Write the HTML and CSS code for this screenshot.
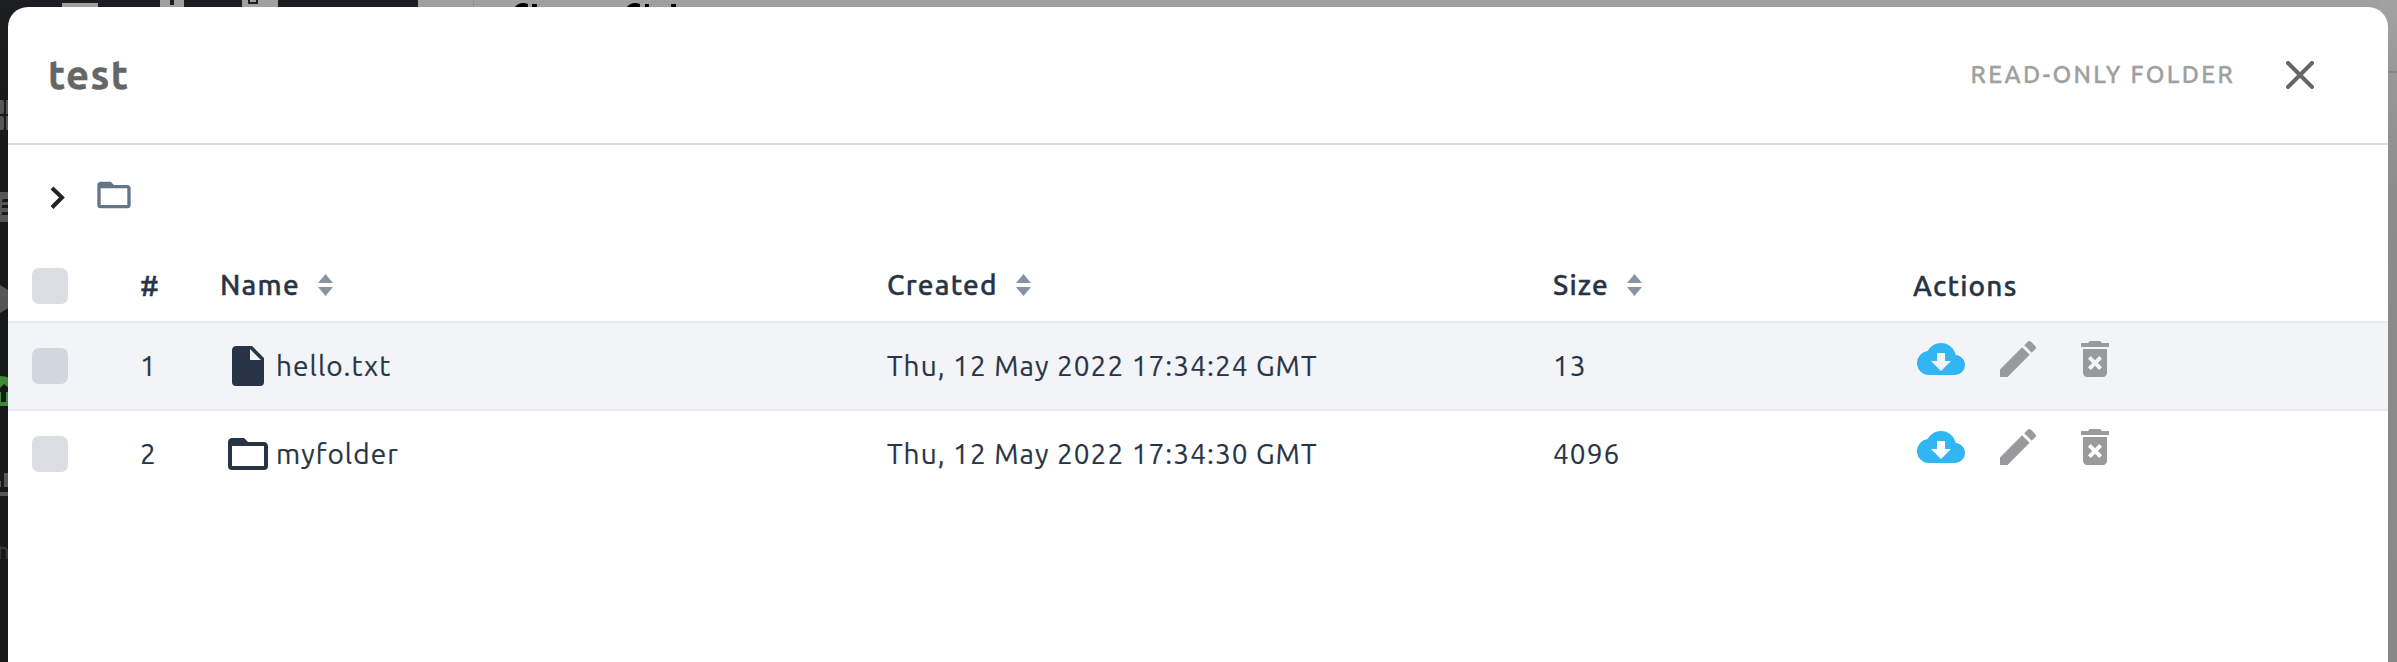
FILE: index.html
```
<!DOCTYPE html>
<html lang="en">
<head>
<meta charset="utf-8">
<title>test</title>
<link rel="stylesheet" href="styles.css">
</head>
<body>
<svg class="backdrop" width="2397" height="662" viewBox="0 0 2397 662">
  <defs>
    <linearGradient id="edge" x1="0" y1="0" x2="0" y2="1"><stop offset="0" stop-color="#a2a2a2"/><stop offset=".11" stop-color="#989898"/><stop offset=".3" stop-color="#8c8c8c"/><stop offset="1" stop-color="#888"/></linearGradient>
    <linearGradient id="side" x1="0" y1="0" x2="0" y2="1"><stop offset="0" stop-color="#1c1e20"/><stop offset=".2" stop-color="#18191b"/><stop offset="1" stop-color="#18191a"/></linearGradient>
  </defs>
  <rect width="2397" height="662" fill="#a0a0a0"/>
  <rect x="2380" width="17" height="662" fill="url(#edge)"/>
  <path d="M2388 71h9v2h-9z" fill="#868686"/>
  <path d="M473 0h1v7h-1z" fill="#949494"/>
  <rect width="418" height="662" fill="url(#side)"/>
  <path d="M62 3h36v5H62zM160 0h24v8h-24zM242 0h36v8h-36z" fill="#a0a0a0"/>
  <path d="M170 0h4v5h-4zM248 0h10v4h-10z" fill="#1c1e20"/>
  <path d="M250 0h6v2h-6z" fill="#a0a0a0"/>
  <path d="M514 8q4-5 9-5 3 0 5 1v4zM532 4h5v4h-5zM626 8q4-5 9-5 3 0 5 1v4zM645 4h4v4h-4zM671 4h5v4h-5z" fill="#000"/>
  <path d="M0 100h2q2 0 2 2v10q0 2-2 2H0zM6 100h4v14H6zM0 116h2q2 0 2 2v10q0 2-2 2H0zM6 116h4v14H6zM0 192h9v30H0zM0 285l10 6v16l-10 6z" fill="#555657"/>
  <path d="M3 199h6v3H2zM2 205h7v3H2zM2 212h7v3H2z" fill="#18191b"/>
  <path d="M0 376q6 0 9 2v28H0z" fill="#3f8a32"/>
  <path d="M0 388l4-4 5 4v4H6v10H1v-10H0z" fill="#18191b"/>
  <path d="M0 481h1v6H0zM4 473h5v14H4zM0 492h9v4H0z" fill="#555657"/>
  <path d="M0 546h1v13H0zM1 547h4q3 1 3 4v8H6v-7q0-3-3-3H1z" fill="#353638"/>
</svg>
<main class="modal">
  <header class="modal-header">
    <h1 class="title">test</h1>
    <div class="header-side">
      <span class="readonly">READ-ONLY FOLDER</span>
      <svg class="close" width="28" height="28" viewBox="0 0 28 28"><path d="M2 2l24 24M26 2L2 26"/></svg>
    </div>
  </header>
  <nav class="breadcrumb">
    <svg class="chevron" width="15" height="24" viewBox="0 0 15 24"><path d="M2 2l10 9.500L2 21.500"/></svg>
    <svg class="crumb-folder" width="40" height="40" viewBox="0 0 24 24"><path d="M20 18H4V8h16m0-2h-8l-2-2H4c-1.110 0-2 .89-2 2v12a2 2 0 0 0 2 2h16a2 2 0 0 0 2-2V8c0-1.110-.9-2-2-2z"/></svg>
  </nav>
  <section class="table">
    <div class="row head">
      <i class="check"></i><span class="num">#</span>
      <div class="cell sortable"><span>Name</span><svg class="sort" width="15" height="22" viewBox="0 0 15 22"><path d="M0 9L7.500 0 15 9zM0 13h15l-7.500 9z"/></svg></div>
      <div class="cell sortable"><span>Created</span><svg class="sort" width="15" height="22" viewBox="0 0 15 22"><path d="M0 9L7.500 0 15 9zM0 13h15l-7.500 9z"/></svg></div>
      <div class="cell sortable"><span>Size</span><svg class="sort" width="15" height="22" viewBox="0 0 15 22"><path d="M0 9L7.500 0 15 9zM0 13h15l-7.500 9z"/></svg></div>
      <div class="cell">Actions</div>
    </div>
    <div class="row striped">
      <i class="check"></i><span class="num">1</span>
      <div class="cell"><svg class="kind" width="48" height="48" viewBox="0 0 24 24"><path d="M13 9V3.500L18.500 9M6 2c-1.110 0-2 .89-2 2v16a2 2 0 0 0 2 2h12a2 2 0 0 0 2-2V8l-6-6H6z"/></svg><span>hello.txt</span></div>
      <div class="cell">Thu, 12 May 2022 17:34:24 GMT</div>
      <div class="cell">13</div>
      <div class="cell actions">
        <svg class="download" width="48" height="48" viewBox="0 0 24 24"><path d="M17 13l-5 5-5-5h3V9h4v4m5.350-2.970A7.490 7.490 0 0 0 12 4C9.110 4 6.600 5.640 5.350 8.040A6 6 0 0 0 0 14a6 6 0 0 0 6 6h13a5 5 0 0 0 5-5c0-2.640-2.050-4.780-4.650-4.970z"/></svg>
        <svg width="48" height="48" viewBox="0 0 24 24"><path d="M20.710 7.040c.39-.39.39-1.040 0-1.410l-2.340-2.340c-.37-.39-1.020-.39-1.410 0l-1.840 1.830 3.750 3.750M3 17.250V21h3.750L17.810 9.930l-3.750-3.750L3 17.250z"/></svg>
        <svg width="48" height="48" viewBox="0 0 24 24"><path d="M6 19c0 1.100.9 2 2 2h8c1.100 0 2-.9 2-2V7H6v12zm2.460-7.120l1.410-1.410L12 12.590l2.120-2.120 1.410 1.410L13.410 14l2.120 2.120-1.410 1.410L12 15.410l-2.120 2.120-1.410-1.410L10.590 14l-2.130-2.120zM15.500 4l-1-1h-5l-1 1H5v2h14V4z"/></svg>
      </div>
    </div>
    <div class="row">
      <i class="check"></i><span class="num">2</span>
      <div class="cell"><svg class="kind" width="48" height="48" viewBox="0 0 24 24"><path d="M20 18H4V8h16m0-2h-8l-2-2H4c-1.110 0-2 .89-2 2v12a2 2 0 0 0 2 2h16a2 2 0 0 0 2-2V8c0-1.110-.9-2-2-2z"/></svg><span>myfolder</span></div>
      <div class="cell">Thu, 12 May 2022 17:34:30 GMT</div>
      <div class="cell">4096</div>
      <div class="cell actions">
        <svg class="download" width="48" height="48" viewBox="0 0 24 24"><path d="M17 13l-5 5-5-5h3V9h4v4m5.350-2.970A7.490 7.490 0 0 0 12 4C9.110 4 6.600 5.640 5.350 8.040A6 6 0 0 0 0 14a6 6 0 0 0 6 6h13a5 5 0 0 0 5-5c0-2.640-2.050-4.780-4.650-4.970z"/></svg>
        <svg width="48" height="48" viewBox="0 0 24 24"><path d="M20.710 7.040c.39-.39.39-1.040 0-1.410l-2.340-2.340c-.37-.39-1.020-.39-1.410 0l-1.840 1.830 3.750 3.750M3 17.250V21h3.750L17.810 9.930l-3.750-3.750L3 17.250z"/></svg>
        <svg width="48" height="48" viewBox="0 0 24 24"><path d="M6 19c0 1.100.9 2 2 2h8c1.100 0 2-.9 2-2V7H6v12zm2.460-7.120l1.410-1.410L12 12.590l2.120-2.120 1.410 1.410L13.410 14l2.120 2.120-1.410 1.410L12 15.410l-2.120 2.120-1.410-1.410L10.590 14l-2.130-2.120zM15.500 4l-1-1h-5l-1 1H5v2h14V4z"/></svg>
      </div>
    </div>
  </section>
</main>
</body>
</html>
```
FILE: styles.css
```
* { box-sizing: border-box; }
html, body { margin: 0; height: 662px; overflow: hidden; }
body { padding: 7px 9px 0 8px; color: #283445; font: 28px/40px Ubuntu, "Open Sans", sans-serif; letter-spacing: 1.04px; -webkit-text-stroke: .2px; }
svg { display: block; flex: none; fill: currentColor; }
.backdrop { position: absolute; left: 0; top: 0; z-index: -1; }
.modal { height: 655px; background: #fff; border-radius: 20px 20px 0 0; overflow: hidden; }
.modal-header { height: 138px; display: flex; align-items: center; justify-content: space-between; padding: 0 74px 0 40px; border-bottom: 2px solid #dcdcdc; color: #666; }
.title { margin: 0; font-size: 40px; font-weight: 700; letter-spacing: 1.4px; -webkit-text-stroke: .4px; }
.header-side { display: flex; align-items: center; gap: 51px; }
.readonly { font-size: 24px; font-weight: 500; letter-spacing: 2.3px; color: #a0a0a0; -webkit-text-stroke: .3px; }
.close { fill: none; stroke: #666; stroke-width: 4; stroke-linecap: round; }
.breadcrumb { height: 96px; display: flex; padding: 30px 0 0 42px; }
.chevron { margin-top: 11px; fill: none; stroke: #222; stroke-width: 4; }
.crumb-folder { margin-left: 29px; color: #647587; }
.row { height: 86px; display: grid; grid-template-columns: 108px 80px 667px 666px 360px 1fr; align-items: center; padding-left: 24px; white-space: nowrap; }
.head { height: 82px; padding-top: 10px; border-bottom: 2px solid #e7eaee; font-weight: 500; letter-spacing: 1.2px; -webkit-text-stroke: .4px; }
.striped { height: 88px; background: #f3f4f7; border-bottom: 2px solid #e7eaee; }
.check { width: 36px; height: 36px; border-radius: 7px; background: #dadee3; }
.striped .check { background: #d2d7de; }
.cell { display: flex; align-items: center; }
.sortable { padding-bottom: 2px; }
.sort { color: #8893a1; margin-left: 18px; }
.kind { margin: 0 4px; }
.actions { gap: 29px; padding-left: 4px; margin-top: -14px; color: #999a9b; }
.download { color: #31b5f3; }
```
